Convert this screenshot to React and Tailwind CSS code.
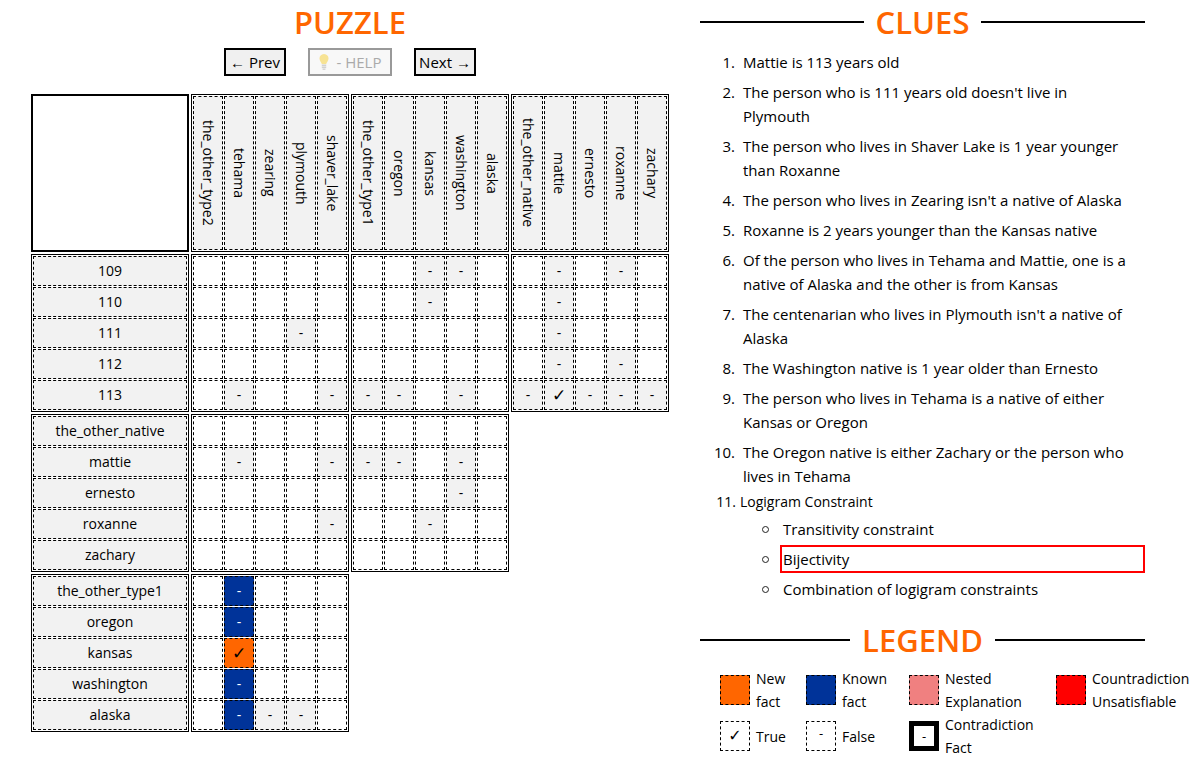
import React from 'react';

const colA = ['the_other_type2', 'tehama', 'zearing', 'plymouth', 'shaver_lake'];
const colB = ['the_other_type1', 'oregon', 'kansas', 'washington', 'alaska'];
const colC = ['the_other_native', 'mattie', 'ernesto', 'roxanne', 'zachary'];
const ages = ['109', '110', '111', '112', '113'];

const E = ['', '', '', '', ''];
const agesA = [E, E, ['', '', '', 'f', ''], E, ['', 'f', '', '', 'f']];
const agesB = [['', '', 'f', 'f', ''], ['', '', 'f', '', ''], E, E, ['f', 'f', '', 'f', '']];
const agesC = [
  ['', 'f', '', 'f', ''],
  ['', 'f', '', '', ''],
  ['', 'f', '', '', ''],
  ['', 'f', '', 'f', ''],
  ['f', 't', 'f', 'f', 'f'],
];
const namesA = [E, ['', 'f', '', '', 'f'], E, ['', '', '', '', 'f'], E];
const namesB = [E, ['f', 'f', '', 'f', ''], ['', '', '', 'f', ''], ['', '', 'f', '', ''], E];
const statesA = [
  ['', 'k', '', '', ''],
  ['', 'k', '', '', ''],
  ['', 'n', '', '', ''],
  ['', 'k', '', '', ''],
  ['', 'k', 'f', 'f', ''],
];

function Cell({ v }) {
  const base = 'h-[30px] border border-dashed border-black flex items-center justify-center text-[14px] leading-none';
  if (v === 'f') return <div className={`${base} bg-[#f2f2f2] text-black`}>-</div>;
  if (v === 't') return <div className={`${base} bg-[#f2f2f2] text-black text-[17px] font-['DejaVu_Sans',sans-serif]`}>✓</div>;
  if (v === 'k') return <div className={`${base} bg-[#003399] text-white`}>-</div>;
  if (v === 'n') return <div className={`${base} bg-[#ff6600] text-black text-[17px] font-['DejaVu_Sans',sans-serif]`}>✓</div>;
  return <div className={`${base} bg-white`} />;
}

function Block({ data }) {
  return (
    <div className="w-[158px] h-[158px] border border-black p-px grid grid-cols-5 grid-rows-5 gap-px">
      {data.flat().map((v, i) => (
        <Cell key={i} v={v} />
      ))}
    </div>
  );
}

function HeaderBlock({ cols }) {
  return (
    <div className="w-[158px] h-[158px] border border-black p-px grid grid-cols-5 gap-px">
      {cols.map((c) => (
        <div key={c} className="border border-dashed border-black bg-[#f2f2f2] flex items-center justify-center">
          <span className="[writing-mode:vertical-rl] text-[14px] leading-[30px] text-black">{c}</span>
        </div>
      ))}
    </div>
  );
}

function LabelBlock({ rows }) {
  return (
    <div className="w-[158px] h-[158px] border border-black p-px grid grid-rows-5 gap-px">
      {rows.map((r) => (
        <div key={r} className="border border-dashed border-black bg-[#f2f2f2] flex items-center justify-center pb-[2px] text-[14px] text-black">
          {r}
        </div>
      ))}
    </div>
  );
}

function Bulb() {
  return (
    <svg width="10" height="18" viewBox="0 0 10 18" className="opacity-40">
      <path d="M5 1 C2 1 0.5 3.2 0.5 5.6 C0.5 8 2.3 9.2 2.8 11 L7.2 11 C7.7 9.2 9.5 8 9.5 5.6 C9.5 3.2 8 1 5 1 Z" fill="#f7c400" />
      <rect x="2.8" y="11.5" width="4.4" height="1.6" fill="#999" />
      <rect x="2.8" y="13.5" width="4.4" height="1.6" fill="#999" />
      <rect x="3.6" y="15.5" width="2.8" height="1.4" fill="#999" />
    </svg>
  );
}

function SectionTitle({ children }) {
  return (
    <div className="flex items-center gap-[12px]">
      <div className="flex-1 h-[2px] bg-black" />
      <h2 className="text-[31px] font-semibold leading-[38px] text-[#ff6600]">{children}</h2>
      <div className="flex-1 h-[2px] bg-black" />
    </div>
  );
}

const clues = [
  'Mattie is 113 years old',
  "The person who is 111 years old doesn't live in Plymouth",
  'The person who lives in Shaver Lake is 1 year younger than Roxanne',
  "The person who lives in Zearing isn't a native of Alaska",
  'Roxanne is 2 years younger than the Kansas native',
  'Of the person who lives in Tehama and Mattie, one is a native of Alaska and the other is from Kansas',
  "The centenarian who lives in Plymouth isn't a native of Alaska",
  'The Washington native is 1 year older than Ernesto',
  'The person who lives in Tehama is a native of either Kansas or Oregon',
  'The Oregon native is either Zachary or the person who lives in Tehama',
];

const subItems = ['Transitivity constraint', 'Bijectivity', 'Combination of logigram constraints'];

function LegendItem({ box, lines }) {
  return (
    <div className="flex items-center gap-[6px]">
      {box}
      <div className="text-[14px] leading-[23px] text-black">
        {lines.map((l) => (
          <div key={l}>{l}</div>
        ))}
      </div>
    </div>
  );
}

export default function App() {
  const empty = <div className="w-[158px] h-[158px]" />;
  return (
    <div className="flex w-[1203px] min-h-[765px] bg-white text-black font-['Open_Sans',sans-serif]">
      {/* Left: puzzle */}
      <div className="w-[700px] flex flex-col items-center pt-[3px]">
        <h1 className="text-[31px] font-semibold leading-[38px] text-[#ff6600]">PUZZLE</h1>
        <div className="mt-[7px] flex gap-[22px]">
          <button className="w-[62px] h-[28px] border-2 border-black bg-[#f0f0f0] text-[15px] leading-none flex items-center justify-center">
            ← Prev
          </button>
          <button className="w-[84px] h-[28px] border-2 border-[#999] bg-[#f8f8f8] text-[15px] leading-none text-[#aaa] flex items-center justify-center gap-[8px]">
            <Bulb />
            <span>- HELP</span>
          </button>
          <button className="w-[62px] h-[28px] border-2 border-black bg-[#f0f0f0] text-[15px] leading-none flex items-center justify-center">
            Next →
          </button>
        </div>
        <div className="mt-[18px] grid grid-cols-[repeat(4,158px)] gap-[2px]">
          <div className="w-[158px] h-[158px] border-2 border-black bg-white" />
          <HeaderBlock cols={colA} />
          <HeaderBlock cols={colB} />
          <HeaderBlock cols={colC} />

          <LabelBlock rows={ages} />
          <Block data={agesA} />
          <Block data={agesB} />
          <Block data={agesC} />

          <LabelBlock rows={colC} />
          <Block data={namesA} />
          <Block data={namesB} />
          {empty}

          <LabelBlock rows={colB} />
          <Block data={statesA} />
          {empty}
          {empty}
        </div>
      </div>

      {/* Right: clues and legend */}
      <div className="w-[445px] pt-[3px]">
        <SectionTitle>CLUES</SectionTitle>
        <ol className="mt-[9px] flex flex-col gap-[6px] text-[15px] leading-[24px]">
          {clues.map((c, i) => (
            <li key={c} className="flex">
              <span className="w-[35px] shrink-0 text-right">{i + 1}.</span>
              <span className="ml-[8px] w-[389px]">{c}</span>
            </li>
          ))}
          <li>
            <div className="flex text-[14px] leading-[16px]">
              <span className="w-[36px] shrink-0 text-right">11.</span>
              <span className="ml-[4px]">Logigram Constraint</span>
            </div>
            <ul className="mt-[5px] flex flex-col gap-[2px] text-[15px] leading-[24px]">
              {subItems.map((s) => (
                <li key={s} className="flex items-center">
                  <span className="ml-[62px] w-[7px] h-[7px] rounded-full border border-[#222] shrink-0" />
                  <span
                    className={
                      s === 'Bijectivity'
                        ? 'ml-[11px] flex-1 border-2 border-[#ff0000] pl-px'
                        : 'ml-[11px] flex-1 border-2 border-transparent pl-px'
                    }
                  >
                    {s}
                  </span>
                </li>
              ))}
            </ul>
          </li>
        </ol>

        <div className="mt-[18px]">
          <SectionTitle>LEGEND</SectionTitle>
        </div>
        <div className="mt-[8px] pl-[20px] grid grid-cols-[86px_103px_147px_160px]">
          <LegendItem box={<div className="w-[30px] h-[30px] border border-dashed border-black bg-[#ff6600]" />} lines={['New', 'fact']} />
          <LegendItem box={<div className="w-[30px] h-[30px] border border-dashed border-black bg-[#003399]" />} lines={['Known', 'fact']} />
          <LegendItem box={<div className="w-[30px] h-[30px] border border-dashed border-black bg-[#f08080]" />} lines={['Nested', 'Explanation']} />
          <LegendItem box={<div className="w-[30px] h-[30px] border border-dashed border-black bg-[#ff0000]" />} lines={['Countradiction', 'Unsatisfiable']} />
          <LegendItem
            box={
              <div className="w-[30px] h-[30px] border border-dashed border-black flex items-center justify-center text-[16px] font-['DejaVu_Sans',sans-serif]">
                ✓
              </div>
            }
            lines={['True']}
          />
          <LegendItem
            box={
              <div className="w-[30px] h-[30px] border border-dashed border-black flex items-start justify-center pt-[5px] text-[13px] leading-none">
                -
              </div>
            }
            lines={['False']}
          />
          <LegendItem
            box={
              <div className="w-[30px] h-[30px] border-[5px] border-black flex items-center justify-center text-[13px] leading-none">
                -
              </div>
            }
            lines={['Contradiction', 'Fact']}
          />
          <div />
        </div>
      </div>
    </div>
  );
}
